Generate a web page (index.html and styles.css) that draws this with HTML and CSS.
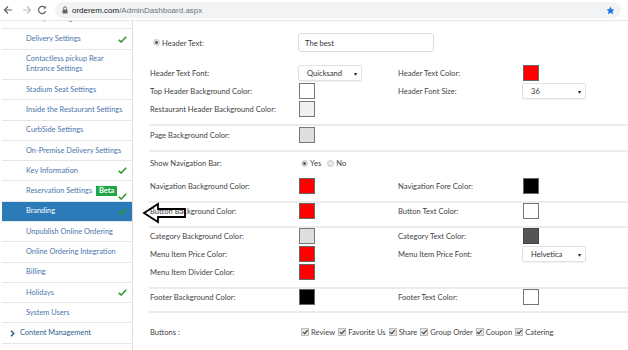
FILE: index.html
```html
<!DOCTYPE html>
<html lang="en">
<head>
    <meta charset="UTF-8">
    <meta name="viewport" content="width=device-width, initial-scale=1.0">
    <title>Admin Dashboard - Branding</title>
    <link rel="stylesheet" href="styles.css">
</head>
<body>

    <!-- Browser chrome -->
    <div class="browser-bar">
        <svg class="nav-icon" width="10" height="10" viewBox="0 0 10 10"><path d="M9 5H1.5M5 1.5L1.5 5L5 8.5" fill="none" stroke="#5f6368" stroke-width="1.2"/></svg>
        <svg class="nav-icon fwd" width="10" height="10" viewBox="0 0 10 10"><path d="M1 5H8.5M5 1.5L8.5 5L5 8.5" fill="none" stroke="#bdc1c6" stroke-width="1.2"/></svg>
        <svg class="nav-icon" width="10" height="10" viewBox="0 0 10 10"><path d="M8.3 3.2A3.6 3.6 0 1 0 8.6 6" fill="none" stroke="#5f6368" stroke-width="1.2"/><path d="M6.2 3.4H8.8V0.8Z" fill="#5f6368"/></svg>
        <div class="omnibox">
            <svg class="lock" width="6" height="8" viewBox="0 0 6 8"><path d="M1.5 3.5V2.3a1.5 1.5 0 0 1 3 0v1.2" fill="none" stroke="#5f6368" stroke-width="0.9"/><rect x="0.5" y="3.5" width="5" height="4" rx="0.6" fill="#5f6368"/></svg>
            <span class="host">orderem.com</span><span class="path">/AdminDashboard.aspx</span>
            <svg class="star" width="9" height="9" viewBox="0 0 10 10"><path d="M5 0.6l1.35 2.9 3.1.35-2.3 2.1.65 3.1L5 7.5 2.2 9.05l.65-3.1L.55 3.85l3.1-.35z" fill="#1a73e8"/></svg>
        </div>
    </div>

    <div class="layout">
        <aside class="sidebar">
            <ul class="menu">
                <li class="menu-item cut">Pickup Settings</li>
                <li class="menu-item">Delivery Settings <svg class="check" width="9" height="7" viewBox="0 0 9 7"><path d="M0.8 3.8L3.2 6L8.2 0.8" fill="none" stroke="#2e9a2e" stroke-width="1.6"/></svg></li>
                <li class="menu-item">Contactless pickup Rear<br>Entrance Settings</li>
                <li class="menu-item">Stadium Seat Settings</li>
                <li class="menu-item">Inside the Restaurant Settings</li>
                <li class="menu-item">CurbSide Settings</li>
                <li class="menu-item">On-Premise Delivery Settings</li>
                <li class="menu-item">Key Information <svg class="check" width="9" height="7" viewBox="0 0 9 7"><path d="M0.8 3.8L3.2 6L8.2 0.8" fill="none" stroke="#2e9a2e" stroke-width="1.6"/></svg></li>
                <li class="menu-item">
                    <span class="nowrap">Reservation Settings <span class="badge">Beta</span></span>
                    <svg class="check low" width="9" height="7" viewBox="0 0 9 7"><path d="M0.8 3.8L3.2 6L8.2 0.8" fill="none" stroke="#2e9a2e" stroke-width="1.6"/></svg>
                </li>
                <li class="menu-item active">Branding <svg class="check" width="9" height="7" viewBox="0 0 9 7"><path d="M0.8 3.8L3.2 6L8.2 0.8" fill="none" stroke="#2e9a2e" stroke-width="1.6"/></svg></li>
                <li class="menu-item">Unpublish Online Ordering</li>
                <li class="menu-item">Online Ordering Integration</li>
                <li class="menu-item">Billing</li>
                <li class="menu-item">Holidays <svg class="check" width="9" height="7" viewBox="0 0 9 7"><path d="M0.8 3.8L3.2 6L8.2 0.8" fill="none" stroke="#2e9a2e" stroke-width="1.6"/></svg></li>
                <li class="menu-item">System Users</li>
                <li class="menu-item group"><svg class="chevron" width="5" height="7" viewBox="0 0 5 7"><path d="M1 0.8L3.8 3.5L1 6.2" fill="none" stroke="#2c5d8f" stroke-width="1.5"/></svg>Content Management</li>
                <li class="menu-item group">&nbsp;</li>
            </ul>
        </aside>

        <main class="content">
            <section class="block first">
                <div class="row tall">
                    <label class="label"><span class="radio on"></span>Header Text:</label>
                    <div class="field span"><input class="text-input" type="text" value="The best"></div>
                </div>
                <div class="row gap">
                    <span class="label">Header Text Font:</span>
                    <div class="field"><div class="select">Quicksand<span class="caret">&#9662;</span></div></div>
                    <span class="label">Header Text Color:</span>
                    <div class="field"><span class="swatch red"></span></div>
                </div>
                <div class="row">
                    <span class="label">Top Header Background Color:</span>
                    <div class="field"><span class="swatch white"></span></div>
                    <span class="label">Header Font Size:</span>
                    <div class="field"><div class="select">36<span class="caret">&#9662;</span></div></div>
                </div>
                <div class="row">
                    <span class="label">Restaurant Header Background Color:</span>
                    <div class="field"><span class="swatch light"></span></div>
                </div>
            </section>

            <section class="block page-block">
                <div class="row">
                    <span class="label">Page Background Color:</span>
                    <div class="field"><span class="swatch grey"></span></div>
                </div>
            </section>

            <section class="block nav-block">
                <div class="row">
                    <span class="label">Show Navigation Bar:</span>
                    <div class="field options">
                        <span class="radio on"></span>Yes
                        <span class="radio"></span>No
                    </div>
                </div>
                <div class="row">
                    <span class="label">Navigation Background Color:</span>
                    <div class="field"><span class="swatch red"></span></div>
                    <span class="label">Navigation Fore Color:</span>
                    <div class="field"><span class="swatch black"></span></div>
                </div>
            </section>

            <section class="block">
                <div class="row">
                    <span class="label">Button Background Color:</span>
                    <div class="field"><span class="swatch red"></span></div>
                    <span class="label">Button Text Color:</span>
                    <div class="field"><span class="swatch white"></span></div>
                </div>
            </section>

            <section class="block">
                <div class="row">
                    <span class="label">Category Background Color:</span>
                    <div class="field"><span class="swatch grey"></span></div>
                    <span class="label">Category Text Color:</span>
                    <div class="field"><span class="swatch dark"></span></div>
                </div>
                <div class="row">
                    <span class="label">Menu Item Price Color:</span>
                    <div class="field"><span class="swatch red"></span></div>
                    <span class="label">Menu Item Price Font:</span>
                    <div class="field"><div class="select">Helvetica<span class="caret">&#9662;</span></div></div>
                </div>
                <div class="row">
                    <span class="label">Menu Item Divider Color:</span>
                    <div class="field"><span class="swatch red"></span></div>
                </div>
            </section>

            <section class="block footer-block">
                <div class="row">
                    <span class="label">Footer Background Color:</span>
                    <div class="field"><span class="swatch black"></span></div>
                    <span class="label">Footer Text Color:</span>
                    <div class="field"><span class="swatch white"></span></div>
                </div>
            </section>

            <section class="block last">
                <div class="row">
                    <span class="label">Buttons :</span>
                    <div class="field span options checks">
                        <span class="box"></span>Review
                        <span class="box"></span>Favorite Us
                        <span class="box"></span>Share
                        <span class="box"></span>Group Order
                        <span class="box"></span>Coupon
                        <span class="box"></span>Catering
                    </div>
                </div>
            </section>

            <!-- annotation arrow drawn over the page -->
            <svg class="pointer-arrow" width="46" height="22" viewBox="0 0 46 22">
                <path d="M2 11L16 2V7H43V15H16V20Z" fill="none" stroke="#000" stroke-width="1.8" stroke-linejoin="miter"/>
            </svg>
        </main>
    </div>

</body>
</html>
```

FILE: styles.css
```css
body {
    margin: 0;
    width: 628px;
    height: 350px;
    overflow: hidden;
    background-color: #fff;
    font-family: Lato, "Noto Sans", sans-serif;
}

/* browser chrome */
.browser-bar {
    height: 21px;
    display: flex;
    align-items: center;
    padding-left: 3px;
    border-bottom: 1px solid #e6e6e6;
    box-sizing: border-box;
}
.nav-icon {
    margin-right: 5px;
}
.fwd {
    margin-left: 4px;
}
.omnibox {
    flex: 1;
    height: 16px;
    margin: 0 7px 0 3px;
    border-radius: 8px;
    background-color: #f1f3f4;
    display: flex;
    align-items: center;
    padding-left: 7px;
    font-family: "Liberation Sans", Arial, sans-serif;
    font-size: 8px;
}
.lock {
    margin-right: 4px;
}
.host {
    color: #202124;
}
.path {
    color: #70757a;
}
.star {
    margin-left: auto;
    margin-right: 6px;
}

.layout {
    display: flex;
    height: 329px;
}

/* sidebar */
.sidebar {
    width: 132px;
    flex: none;
    border-right: 1px solid #dedede;
    overflow: hidden;
}
.menu {
    list-style: none;
    margin: 0;
    padding: 0 0 0 2px;
}
.menu-item {
    display: flex;
    align-items: center;
    justify-content: space-between;
    padding: 4.65px 5px 4.65px 24px;
    line-height: 10px;
    font-size: 7.4px;
    color: #4a76ad;
    border-bottom: 1px solid #e6e6e6;
}
.menu-item.cut {
    margin-top: -11.8px;
}
.menu-item.active {
    background-color: #2b7bb9;
    color: #fff;
}
.menu-item.group {
    justify-content: flex-start;
    padding-left: 8px;
    color: #2c5d8f;
}
.nowrap {
    white-space: nowrap;
}
.chevron {
    margin-right: 5px;
}
.check.low {
    align-self: flex-end;
    margin-bottom: -4px;
}
.badge {
    display: inline-block;
    padding: 0 3px;
    margin-left: 2px;
    line-height: 10px;
    background-color: #1fa64b;
    color: #fff;
    font-weight: bold;
}

/* main form */
.content {
    flex: 1;
    position: relative;
    padding-left: 16px;
}
.block {
    border-bottom: 2px solid #ececec;
    padding-bottom: 5px;
}
.block.first {
    padding-top: 12px;
}
.block.page-block {
    padding-top: 1px;
}
.block.nav-block .row:first-child {
    margin-top: 3px;
}
.block.nav-block .row + .row {
    margin-top: 5px;
}
.block.footer-block {
    padding-bottom: 4px;
}
.block.last {
    border-bottom: none;
    padding-top: 11px;
}
.row {
    display: grid;
    grid-template-columns: 149px 99px 125px 1fr;
    align-items: start;
    height: 18px;
}
.row.tall {
    height: 19px;
    align-items: center;
}
.row.gap {
    margin-top: 13px;
}
.label {
    padding-left: 1px;
    height: 16px;
    font-size: 7.6px;
    color: #444;
    display: flex;
    align-items: center;
}
.field {
    display: flex;
    align-items: center;
    height: 16px;
}
.field.span {
    grid-column: 2 / 5;
}
.row.tall .field,
.row.tall .label {
    height: 19px;
}
.text-input {
    width: 136px;
    height: 19px;
    box-sizing: border-box;
    border: 1px solid #dcdcdc;
    border-radius: 3px;
    padding: 0 6px;
    font-family: inherit;
    font-size: 7.6px;
    color: #333;
}
.select {
    width: 64px;
    height: 16px;
    box-sizing: border-box;
    border: 1px solid #e2e2e2;
    border-radius: 2px;
    box-shadow: 0 1px 1px rgba(0, 0, 0, 0.06);
    display: flex;
    align-items: center;
    padding: 0 4px 0 8px;
    font-size: 7.6px;
    color: #333;
}
.caret {
    margin-left: auto;
    font-size: 6px;
    color: #222;
}
.swatch {
    display: inline-block;
    width: 16px;
    height: 16px;
    box-sizing: border-box;
    margin-left: 1px;
    border: 1px solid #666;
}
.swatch.red { background-color: #ff0000; }
.swatch.white { background-color: #fff; border-color: #777; }
.swatch.light { background-color: #f0f0f0; border-color: #777; }
.swatch.grey { background-color: #dedede; border-color: #777; }
.swatch.black { background-color: #000; }
.swatch.dark { background-color: #555; border-color: #444; }

.options {
    font-size: 7.6px;
    color: #444;
    padding-left: 1px;
}
.radio {
    display: inline-block;
    width: 5px;
    height: 5px;
    border-radius: 50%;
    border: 1px solid #c8c8c8;
    background-color: #e9e9e9;
    margin: 0 2px 0 2px;
}
.radio.on {
    background: radial-gradient(circle, #555 35%, #e6e6e6 45%);
}
.options .radio:not(:first-child) {
    margin-left: 6px;
}
.label .radio {
    margin-left: 3px;
}
.box {
    display: inline-block;
    width: 6px;
    height: 6px;
    background-color: #e4e4e4;
    border: 0.5px solid #bbb;
    margin: 0 2px 0 3px;
    position: relative;
}
.box::after {
    content: "";
    position: absolute;
    left: 1.5px;
    top: 0;
    width: 2px;
    height: 3.5px;
    border: solid #333;
    border-width: 0 1px 1px 0;
    transform: rotate(40deg);
}
.box:first-child {
    margin-left: 2px;
}

.pointer-arrow {
    position: absolute;
    left: 9px;
    top: 181px;
}
```
